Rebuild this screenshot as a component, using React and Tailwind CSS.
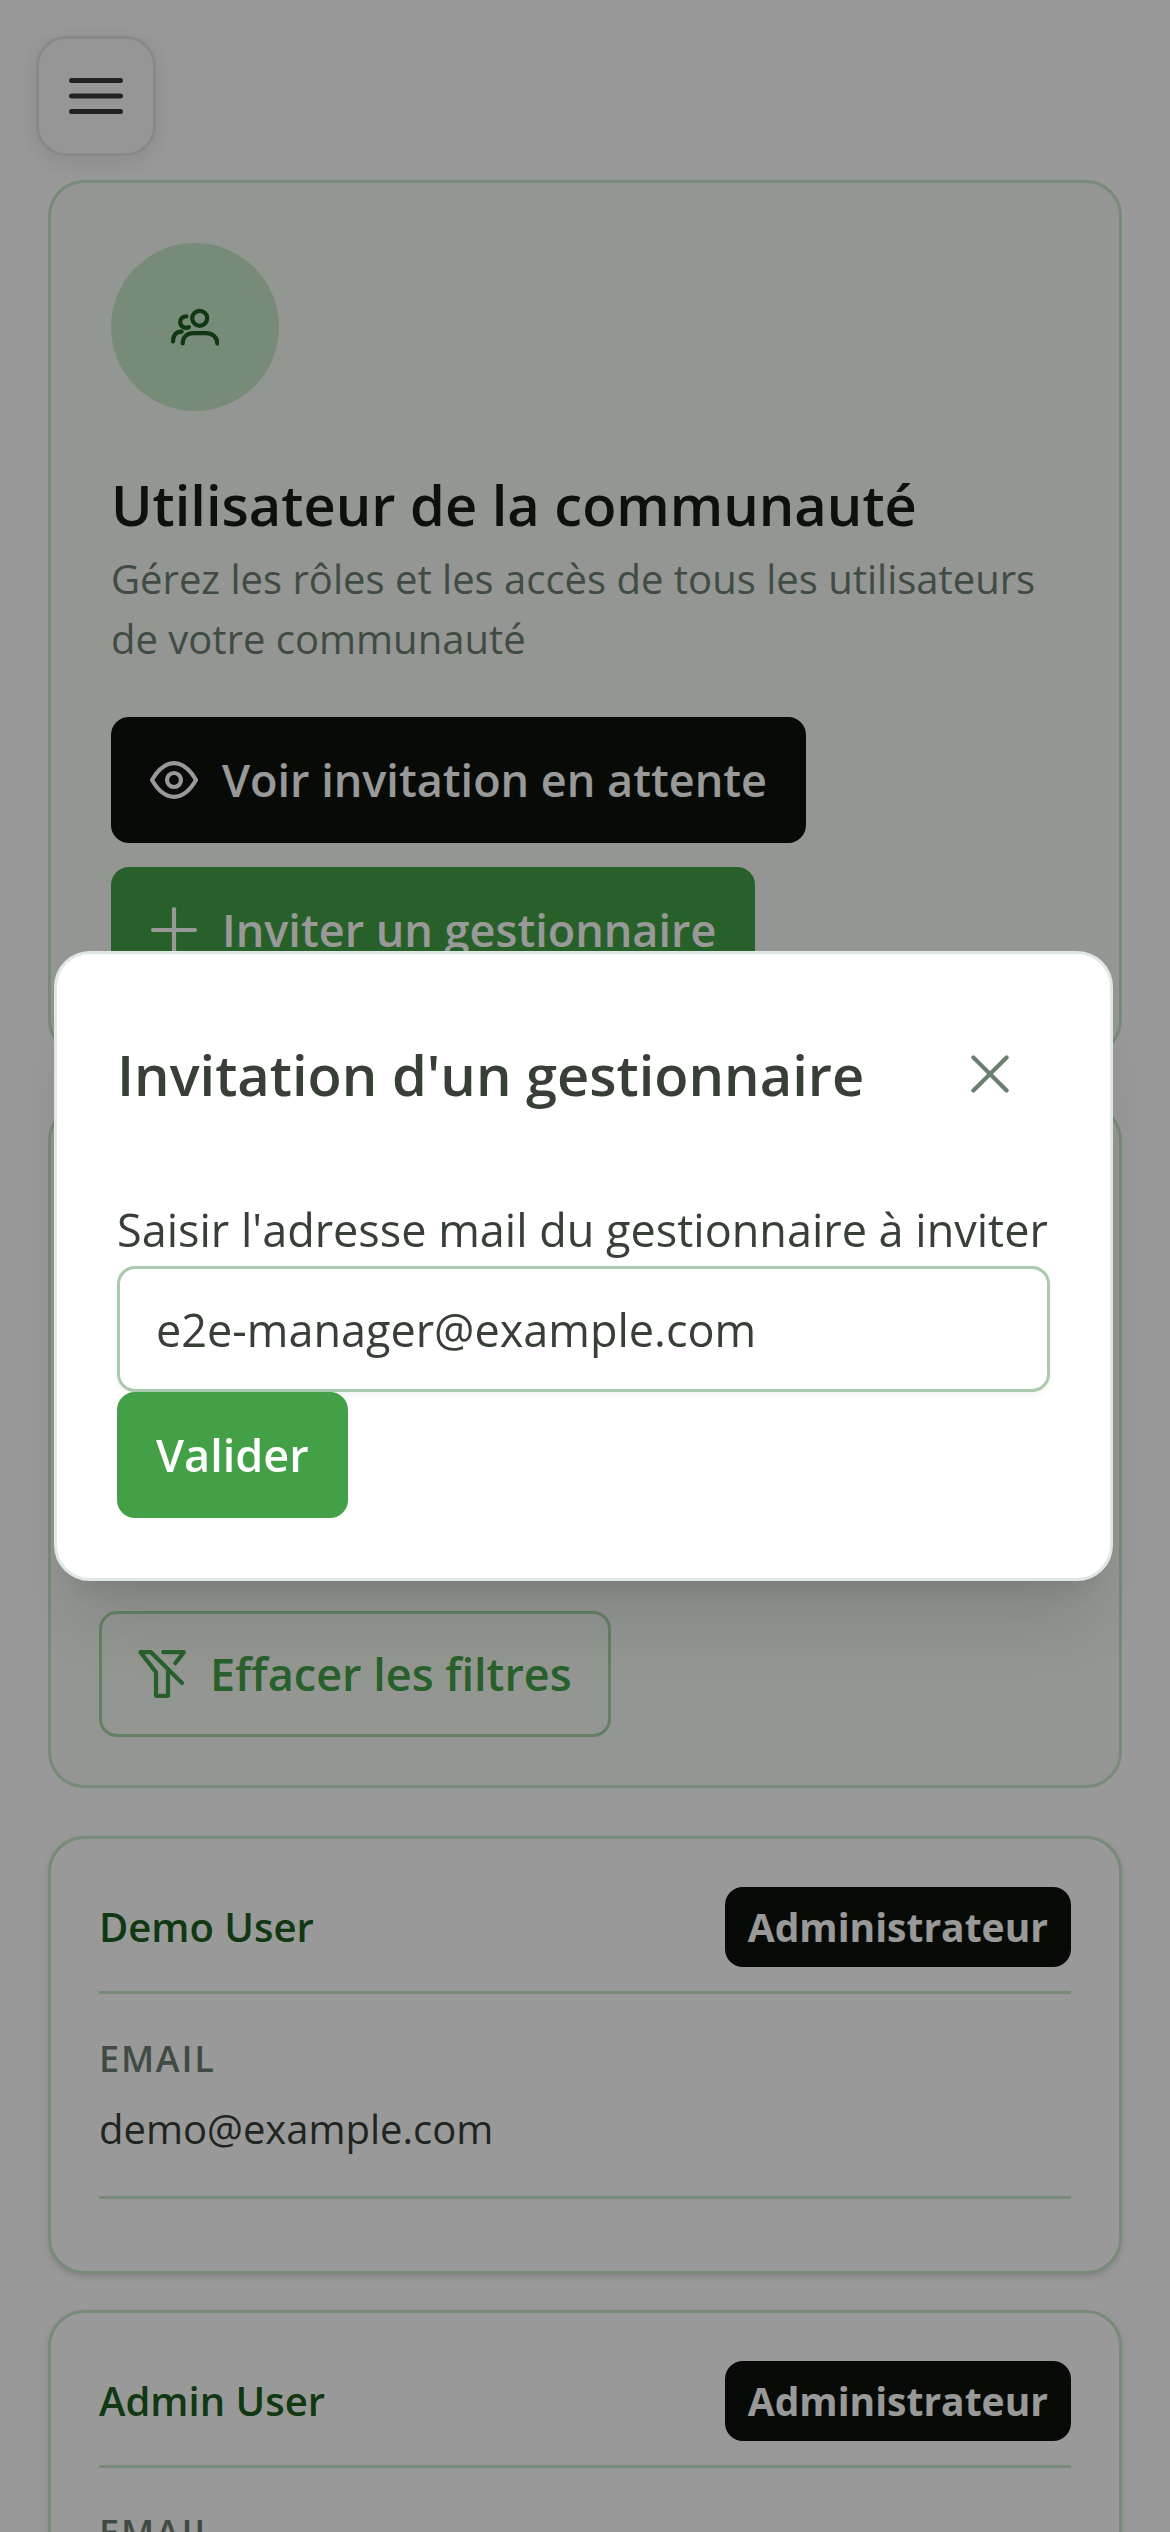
import React, { useState } from 'react';

const users = [
  { name: 'Demo User', role: 'Administrateur', email: 'demo@example.com' },
  { name: 'Admin User', role: 'Administrateur', email: 'admin@example.com' },
];

const Icon = ({ children }) => (
  <svg
    className="size-12 shrink-0"
    viewBox="0 0 48 48"
    fill="none"
    stroke="currentColor"
    strokeWidth="4.2"
    strokeLinecap="round"
    strokeLinejoin="round"
    aria-hidden="true"
  >
    {children}
  </svg>
);

const UsersIcon = () => (
  <Icon>
    <circle cx="28.7" cy="15.3" r="7.5" />
    <path d="M11.7 40.5c0-6.6 4.6-10.4 11-10.4h12c6.4 0 11.6 3.8 11.6 10.4" />
    <path d="M15.4 13.4C11.4 13.4 9.2 16 9.2 19.2c0 3.9 4.4 6.8 8.6 5" />
    <path d="M2 38.5C2 32.4 4.6 28.7 10.6 28.7" />
  </Icon>
);

const EyeIcon = () => (
  <Icon>
    <path d="M2 24C7 15.4 14.4 7.2 24 7.2S41 15.4 46 24C41 32.6 33.6 40.8 24 40.8S7 32.6 2 24Z" />
    <circle cx="24" cy="24" r="7" />
  </Icon>
);

const PlusIcon = () => (
  <Icon>
    <path d="M3 24h42M24 3v42" />
  </Icon>
);

const FilterOffIcon = () => (
  <Icon>
    <path d="M44 33 13 2.2H2.5L18 22.3V45.8h12V21.7" />
    <path d="M25.3 2.2H45.8l-8.5 11" />
  </Icon>
);

const CloseIcon = () => (
  <Icon>
    <path d="M7.4 7.4l33.2 33.2M40.6 7.4 7.4 40.6" />
  </Icon>
);

const MenuIcon = () => (
  <svg className="h-[38px] w-[54px]" viewBox="0 0 54 38" stroke="currentColor" strokeWidth="5" strokeLinecap="round" aria-hidden="true">
    <path d="M2.5 3.5h49M2.5 19h49M2.5 34.5h49" />
  </svg>
);

const buttonBase =
  'flex h-[126px] w-fit items-center gap-6 rounded-[18px] border-3 px-9 text-[45px] font-semibold cursor-pointer';

const UserCard = ({ user }) => (
  <article className="rounded-[36px] border-3 border-[#c8e6c9] bg-white p-12 shadow-[0_3px_9px_rgba(0,0,0,0.1),0_3px_6px_-3px_rgba(0,0,0,0.1)]">
    <div className="flex items-center justify-between border-b-3 border-[#c8e6c9] pb-6">
      <h2 className="text-[40px] font-semibold leading-[60px] text-[#1b5e20]">{user.name}</h2>
      <span className="flex h-20 items-center rounded-[18px] bg-[#0c120c] px-[23px] text-[39px] font-bold text-white">
        {user.role}
      </span>
    </div>
    <dl className="flex flex-col gap-3 border-b-3 border-[#c8e6c9] py-[37px]">
      <dt className="text-4xl font-semibold uppercase leading-14 tracking-wider text-[#6b7f70]">Email</dt>
      <dd className="text-[40px] leading-[60px] text-[#373f37]">{user.email}</dd>
    </dl>
    <div className="pt-6" />
  </article>
);

const App = () => {
  const [open, setOpen] = useState(true);
  const [email, setEmail] = useState('e2e-manager@example.com');

  return (
    <div className="h-screen overflow-hidden bg-white font-['Open_Sans',sans-serif] text-[#373f37]">
      <header className="px-9 pt-9 pb-6">
        <button
          type="button"
          aria-label="Menu"
          className="flex size-[120px] items-center justify-center rounded-[30px] border-3 border-[#e0e8e4] bg-[#fafafa] shadow-[0_6px_24px_rgba(0,0,0,0.1)]"
        >
          <MenuIcon />
        </button>
      </header>

      <main className="flex flex-col gap-12 px-12">
        <section className="flex flex-col gap-12 rounded-[36px] border-3 border-[#c8e6c9] bg-[#f6faf4] p-[60px]">
          <div className="flex size-[168px] items-center justify-center rounded-full bg-[#c8e6c9] text-[#1b5e20]">
            <UsersIcon />
          </div>
          <div>
            <h1 className="text-[56px] font-semibold leading-[90px] text-[#161c16]">Utilisateur de la communauté</h1>
            <p className="text-[40px] leading-[60px] text-[#6b7f70]">
              Gérez les rôles et les accès de tous les utilisateurs de votre communauté
            </p>
          </div>
          <div className="flex flex-col gap-6">
            <button type="button" className={`${buttonBase} border-[#0c120c] bg-[#0c120c] text-white`}>
              <EyeIcon />
              Voir invitation en attente
            </button>
            <button
              type="button"
              onClick={() => setOpen(true)}
              className={`${buttonBase} border-[#43a047] bg-[#43a047] text-white`}
            >
              <PlusIcon />
              Inviter un gestionnaire
            </button>
          </div>
        </section>

        <section className="flex min-h-[684px] flex-col justify-end rounded-[36px] border-3 border-[#c8e6c9] bg-[#f6faf4] p-12">
          <button type="button" className={`${buttonBase} border-[#a5d6a7] text-[#43a047]`}>
            <FilterOffIcon />
            Effacer les filtres
          </button>
        </section>

        <section className="flex flex-col gap-9">
          {users.map((user) => (
            <UserCard key={user.email} user={user} />
          ))}
        </section>
      </main>

      {open && (
        <div className="fixed inset-0 flex items-center bg-black/40 pr-[57px] pl-[54px]">
          <div
            role="dialog"
            aria-modal="true"
            aria-labelledby="invite-title"
            className="flex w-full flex-col gap-[60px] rounded-[36px] border-3 border-[#e0e8e4] bg-white p-[60px] shadow-[0_60px_75px_-15px_rgba(0,0,0,0.1),0_24px_30px_-18px_rgba(0,0,0,0.1)]"
          >
            <div className="flex items-center justify-between">
              <h2 id="invite-title" className="text-[56px] font-semibold leading-[90px]">
                Invitation d'un gestionnaire
              </h2>
              <button
                type="button"
                aria-label="Fermer"
                onClick={() => setOpen(false)}
                className="flex size-[120px] items-center justify-center text-[#6b7f70] cursor-pointer"
              >
                <CloseIcon />
              </button>
            </div>
            <form onSubmit={(e) => e.preventDefault()}>
              <label htmlFor="manager-email" className="block whitespace-nowrap text-[45px] leading-[72px]">
                Saisir l'adresse mail du gestionnaire à inviter
              </label>
              <input
                id="manager-email"
                type="email"
                value={email}
                onChange={(e) => setEmail(e.target.value)}
                className="block h-[126px] w-full rounded-[18px] border-3 border-[#abc9ac] px-9 text-[45px] shadow-[0_3px_6px_rgba(0,0,0,0.05)] outline-none"
              />
              <button type="submit" className={`${buttonBase} border-[#43a047] bg-[#43a047] text-white`}>
                Valider
              </button>
            </form>
          </div>
        </div>
      )}
    </div>
  );
};

export default App;
